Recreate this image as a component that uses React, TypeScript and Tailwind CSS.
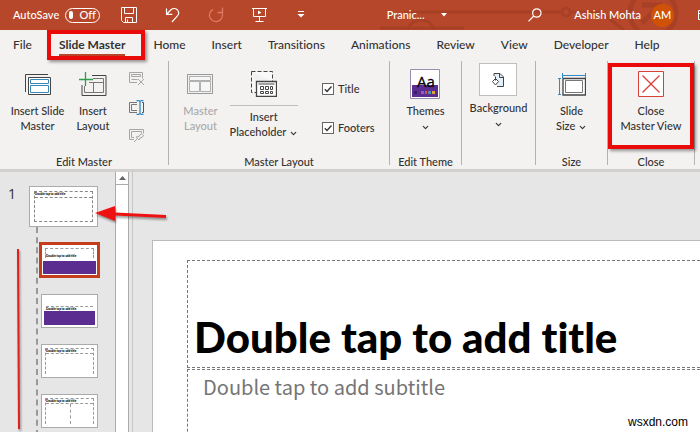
import React, { useState } from 'react';
import { ChevronDown } from 'lucide-react';

const tabs = ['File', 'Slide Master', 'Home', 'Insert', 'Transitions', 'Animations', 'Review', 'View', 'Developer', 'Help'];

const UndoIcon = () => (
  <svg width="15" height="17" viewBox="0 0 15 17" fill="none" stroke="#fff" strokeWidth="1.2">
    <path d="M1.500 1.500v5.800h5.800M1.800 7L6 2.800c2.200-2 5-1.500 6.500.2 1.600 2 1.400 4.500-.3 6.200L7 15" />
  </svg>
);

const RedoIcon = () => (
  <svg width="16" height="16" viewBox="0 0 16 16" fill="none" stroke="#de7a62" strokeWidth="1.3">
    <path d="M9.500 5.500h5v-5M13.800 5.200A6.500 6.500 0 1 1 5 2.300" />
  </svg>
);

const SaveIcon = () => (
  <svg width="16" height="16" viewBox="0 0 16 16" fill="none" stroke="#fff">
    <path d="M.500.500h15v15h-13l-2-2zM3.500.500v6h9v-6M4.500 15.500v-5h7v5M6.500 15.500v-3" />
  </svg>
);

const PresentIcon = () => (
  <svg width="15" height="15" viewBox="0 0 15 15" fill="none" stroke="#fff">
    <path d="M0 .500h15M1.500.500v8h12v-8M7.500 8.500v5M3.500 13.500h8" />
    <path d="M6 2.500v4l3.500-2z" fill="#fff" stroke="none" />
  </svg>
);

const SearchIcon = () => (
  <svg width="14" height="14" viewBox="0 0 14 14" fill="none" stroke="#fff" strokeWidth="1.200">
    <circle cx="8.800" cy="5" r="4.200" />
    <path d="M5.800 8L.500 13.300" />
  </svg>
);

const InsertMasterIcon = () => (
  <svg width="27" height="23" viewBox="0 0 27 23" fill="none" stroke="#444">
    <path d="M1.500 19V1.500H24" />
    <path d="M4.500 4.500h22v17h-22z" fill="#fff" />
    <path d="M6.500 6.500h18v4h-18zM6.500 12.500h18v7h-18z" stroke="#3a87b9" fill="#fff" />
  </svg>
);

const InsertLayoutIcon = () => (
  <svg width="28" height="25" viewBox="0 0 28 25" fill="none" stroke="#444">
    <path d="M13 3.500h14v20h-24V13" />
    <path d="M14 6.500h10.500v14h-19V14M10 10.500h14M14.500 10.500v10" stroke="#777" />
    <path d="M6.500 0v14M0 7.500h14" stroke="#2d9f4c" strokeWidth="1.300" />
  </svg>
);

const DeleteIcon = () => (
  <svg width="16" height="15" viewBox="0 0 16 15" fill="none" stroke="#a6a6a6">
    <path d="M8 11.500H.500v-10h13v6M2.500 3.500h9v2h-9zM2.500 8.500h6M9 8l6 6M15 8l-6 6" />
  </svg>
);

const RenameIcon = () => (
  <svg width="16" height="15" viewBox="0 0 16 15" fill="none" stroke="#555">
    <path d="M8 2.500H.500v10H8M8 4.500H2.500v6H8" stroke="#777" />
    <path d="M13 2.500h1.500v10H13" />
    <path d="M7.500.500h2l1.500 1 1.500-1h2M7.500 14.500h2l1.500-1 1.500 1h2M11 1.500v12" stroke="#2f8ac6" strokeWidth="1.300" />
  </svg>
);

const PreserveIcon = () => (
  <svg width="16" height="14" viewBox="0 0 16 14" fill="none" stroke="#a6a6a6">
    <path d="M5 10.500H.500v-10h14v4M5 8.500H2.500v-6h10v2M5 13l3-3M7 8l3 3 1-2 2.500-1 1-1.500-2-1.500-2 1-.500 1.500z" />
  </svg>
);

const MasterLayoutIcon = () => (
  <svg width="26" height="20" viewBox="0 0 26 20" fill="none" stroke="#b0b0b0">
    <path d="M.500.500h25v19H.500z" stroke="#999" />
    <path d="M2.500 2.500h21v4h-21zM2.500 7.500h10v10h-10zM13.500 7.500h10v10h-10z" fill="#f6f6f6" />
  </svg>
);

const PlaceholderIcon = () => (
  <svg width="26" height="26" viewBox="0 0 26 26" fill="none" stroke="#444">
    <path d="M.500.500h21v10M.500.500v21h5" fill="#fafafa" strokeDasharray="4 2" />
    <path d="M5.500 10.500h20v15h-20z" fill="#fff" strokeWidth="1.300" />
    <path d="M7.500 13h16" strokeWidth="1" />
    <path d="M9.500 15.500h3v3h-3zM14.500 15.500h3v3h-3zM19.500 15.500h2v3h-2zM9.500 20.500h3v2h-3zM14.500 20.500h3v2h-3zM19.500 20.500h2v2h-2z" />
  </svg>
);

const ThemesIcon = () => (
  <svg width="30" height="30" viewBox="0 0 30 30">
    <path d="M.500.500h29v29H.500z" fill="#fff" stroke="#9a8fb0" />
    <path d="M2 16h26v12H2z" fill="#5c2d91" />
    <text x="7" y="18" fontSize="15" fontFamily="Open Sans, sans-serif" fill="#000" stroke="#000" strokeWidth=".3">Aa</text>
    <path d="M4 22h3v3H4z" fill="#3b1b66" />
    <path d="M11 22h3v3h-3z" fill="#8d5ad0" />
    <path d="M15 22h2v3h-2z" fill="#d9534f" />
    <path d="M18 22h3v3h-3z" fill="#4a8fb5" />
    <path d="M22 22h3v3h-3z" fill="#e3a13a" />
  </svg>
);

const BackgroundIcon = () => (
  <svg width="14" height="16" viewBox="0 0 14 16" fill="none" stroke="#444">
    <path d="M3 4V1.500h6L12.500 5v9.500H6" fill="#e3f0fa" />
    <path d="M8.500 1.500V5.500h4" />
    <path d="M4.500 4.500v4M1.500 9.500l3-3 3 3-3 3.500z" fill="#fff" />
  </svg>
);

const SlideSizeIcon = () => (
  <svg width="28" height="23" viewBox="0 0 28 23" fill="none" stroke="#2f8ac6">
    <path d="M4 2.500h24M4.500 0v5M27.500 0v5M1.500 5v17M0 5.500h3M0 21.500h3" />
    <path d="M5 5.500h22.500v16.500H5z" stroke="#444" strokeWidth="1.300" fill="#fff" />
    <path d="M7.500 7.500h17v12h-17z" stroke="#777" />
  </svg>
);

const CloseIcon = () => (
  <svg width="26" height="26" viewBox="0 0 26 26" fill="none" stroke="#d9403a">
    <path d="M.500.500h25v25H.500z" fill="#fff" />
    <path d="M4.500 4.500l17 17M21.500 4.500l-17 17" strokeWidth="1.300" />
  </svg>
);

const Caret = () => <ChevronDown size={9} strokeWidth={3} className="inline" />;

interface RibbonButtonProps {
  icon: React.ReactNode;
  lines: React.ReactNode[];
  disabled?: boolean;
}

const RibbonButton: React.FC<RibbonButtonProps> = ({ icon, lines, disabled }) => (
  <button disabled={disabled} className="flex flex-col items-center leading-[15px] whitespace-nowrap disabled:text-[#a9a9a9]">
    <span className="flex h-[34px] items-center pb-1">{icon}</span>
    {lines.map((line, i) => (
      <span key={i}>{line}</span>
    ))}
  </button>
);

interface RibbonGroupProps {
  label?: string;
  className: string;
  children: React.ReactNode;
}

const RibbonGroup: React.FC<RibbonGroupProps> = ({ label, className, children }) => (
  <>
    <section className={`flex h-[108px] shrink-0 flex-col ${className}`}>
      <div className="flex flex-1 items-start justify-center pt-2">{children}</div>
      <h2 className="h-[14px] text-center leading-[14px]">{label}</h2>
    </section>
    <div className="h-[104px] w-px shrink-0 bg-[#b5b3b1]" />
  </>
);

interface OptionProps {
  id: string;
  label: string;
}

const Option: React.FC<OptionProps> = ({ id, label }) => {
  const [checked, setChecked] = useState(true);
  return (
    <label htmlFor={id} className="flex items-center gap-1 leading-[15px]">
      <span className="grid">
        <input
          id={id}
          type="checkbox"
          checked={checked}
          onChange={() => setChecked(!checked)}
          className="col-start-1 row-start-1 size-3 appearance-none border border-[#666] bg-white"
        />
        <svg width="12" height="12" viewBox="0 0 12 12" fill="none" stroke="#333" strokeWidth="1.300" className="pointer-events-none col-start-1 row-start-1">
          {checked && <path d="M2.800 6.300l2.200 2.200 4.500-5" />}
        </svg>
      </span>
      {label}
    </label>
  );
};

const Ribbon = () => (
  <div className="flex items-start border-b-3 border-[#d2d0ce] bg-[#f3f2f1] pt-px">
    <RibbonGroup label="Edit Master" className="w-[168px]">
      <div className="flex gap-3">
        <RibbonButton icon={<InsertMasterIcon />} lines={['Insert Slide', 'Master']} />
        <RibbonButton icon={<InsertLayoutIcon />} lines={['Insert', 'Layout']} />
        <div className="flex flex-col gap-[14px] pt-[2px] pr-3 pl-2">
          <button aria-label="Delete" disabled><DeleteIcon /></button>
          <button aria-label="Rename"><RenameIcon /></button>
          <button aria-label="Preserve" disabled><PreserveIcon /></button>
        </div>
      </div>
    </RibbonGroup>
    <RibbonGroup label="Master Layout" className="w-[220px]">
      <div className="flex gap-3">
        <RibbonButton disabled icon={<MasterLayoutIcon />} lines={['Master', 'Layout']} />
        <button className="flex flex-col items-center leading-[15px] whitespace-nowrap">
          <span className="flex h-[37px] w-full justify-center border-b border-[#c0bebc] pt-[2px]"><PlaceholderIcon /></span>
          <span className="pt-[3px]">Insert</span>
          <span>Placeholder <Caret /></span>
        </button>
        <div className="flex flex-col gap-6 pt-3 pl-3">
          <Option id="show-title" label="Title" />
          <Option id="show-footers" label="Footers" />
        </div>
      </div>
    </RibbonGroup>
    <RibbonGroup label="Edit Theme" className="w-[71px]">
      <RibbonButton icon={<ThemesIcon />} lines={['Themes', <Caret />]} />
    </RibbonGroup>
    <RibbonGroup className="w-[73px]">
      <button className="-mt-1.5 flex flex-col items-center leading-[15px]">
        <span className="mb-1 flex h-[33px] w-[38px] items-center justify-center border border-[#c0bebc] bg-white"><BackgroundIcon /></span>
        <span>Background</span>
        <span><Caret /></span>
      </button>
    </RibbonGroup>
    <RibbonGroup label="Size" className="w-[71px]">
      <RibbonButton icon={<SlideSizeIcon />} lines={['Slide', <>Size <Caret /></>]} />
    </RibbonGroup>
    <RibbonGroup label="Close" className="w-[86px]">
      <div className="relative flex w-full justify-center">
        <RibbonButton icon={<CloseIcon />} lines={['Close', 'Master View']} />
        <div className="pointer-events-none absolute inset-x-0 -top-1.5 -bottom-4 border-4 border-[#ea0a0a] shadow-[2px_2px_3px_rgba(0,0,0,0.4)]" />
      </div>
    </RibbonGroup>
  </div>
);

const TitleBar = () => (
  <header className="relative flex h-[30px] items-center bg-[#b7472a] text-[11px] text-white">
    <svg width="320" height="30" viewBox="0 0 320 30" fill="none" stroke="#a84026" strokeWidth="3" className="absolute top-0 right-0">
      <path d="M24 12h158M190 12h30l24 18M0 28h84" />
      <circle cx="186" cy="12" r="4" />
      <circle cx="41" cy="34" r="14" />
      <circle cx="273" cy="13" r="23" strokeWidth="5" />
      <path d="M262 5h18v14M280 5l-18 18" strokeWidth="5" />
    </svg>
    <div className="relative flex w-full items-center pl-[13px]">
      <span className="w-[52px]">AutoSave</span>
      <button aria-label="AutoSave off" className="flex h-[15px] w-[35px] items-center gap-1.5 rounded-full border border-white px-[3px] leading-3">
        <span className="size-2 rounded-full bg-white" />
        Off
      </button>
      <button aria-label="Save" className="ml-[21px]"><SaveIcon /></button>
      <button aria-label="Undo" className="ml-[28px]"><UndoIcon /></button>
      <button aria-label="Redo" className="ml-[28px]"><RedoIcon /></button>
      <button aria-label="Start slide show" className="ml-[28px]"><PresentIcon /></button>
      <button aria-label="Customize toolbar" className="ml-[30px]">
        <svg width="8" height="8" viewBox="0 0 8 8" fill="#fff"><path d="M1 0h6v1H1zM.500 3h7L4 6.500z" /></svg>
      </button>
      <div className="flex flex-1 items-center justify-center gap-4">
        <span>Pranic...</span>
        <svg width="6" height="4" viewBox="0 0 6 4" fill="#fff"><path d="M0 0h6L3 3.500z" /></svg>
      </div>
      <button aria-label="Search"><SearchIcon /></button>
      <span className="ml-8">Ashish Mohta</span>
      <span className="mr-6 ml-2.5 flex size-[23px] items-center justify-center rounded-full bg-[#d05207]">AM</span>
      <svg width="2" height="12" viewBox="0 0 2 12" fill="none" stroke="#fff"><path d="M2 1.500H.500v9H2M.500 4.500H2" /></svg>
    </div>
  </header>
);

const TabBar = () => (
  <nav className="flex h-[30px] items-center gap-[26px] bg-[#f3f2f1] pl-[13px] text-[12px] whitespace-nowrap">
    {tabs.map(tab =>
      tab === 'Slide Master' ? (
        <div key={tab} className="relative mr-0.5 ml-px">
          <button className="border-b-2 border-[#b7472a] pt-0.5 leading-[18px] font-bold">{tab}</button>
          <div className="pointer-events-none absolute -top-1 -right-5 -bottom-1 -left-3 z-10 border-4 border-[#ea0a0a] shadow-[2px_2px_3px_rgba(0,0,0,0.4)]" />
        </div>
      ) : (
        <button key={tab}>{tab}</button>
      )
    )}
  </nav>
);

const TinyTitle = () => <p className="text-[3px] leading-[4px] font-black whitespace-nowrap text-black">Double tap to add title</p>;

const CoverThumb = () => (
  <div className="flex h-full flex-col p-[2px]">
    <div className="flex flex-1 flex-col justify-end px-[2px]">
      <div className="border-t border-dashed border-[#999]"><TinyTitle /></div>
    </div>
    <div className="h-[14px] bg-[#5c2d91]" />
  </div>
);

const ThumbnailPane = () => (
  <aside className="relative flex w-[115px] shrink-0 gap-[14px] overflow-hidden pt-[14px] pl-2">
    <span className="w-[7px] font-['Open_Sans'] text-[14px] leading-4 font-normal">1</span>
    <div>
      <button aria-label="Slide master" className="block h-[41px] w-[69px] border border-[#ababab] bg-white p-[4px] text-left">
        <div className="h-full border border-dashed border-[#888]">
          <div className="h-[6px] border-b border-dashed border-[#888]"><TinyTitle /></div>
        </div>
      </button>
      <div className="ml-[7px] flex flex-col gap-[16px] border-l-2 border-dashed border-[#999] pt-[15px] pb-2">
        <button aria-label="Title slide layout" className="ml-[1px] h-[36px] w-[61px] border-[3px] border-[#c43e1c] bg-white text-left">
          <div className="flex h-full flex-col p-px">
            <div className="flex-1 px-[2px] pt-[2px]">
              <div className="border border-b-0 border-dashed border-[#999] pt-[5px]"><TinyTitle /></div>
            </div>
            <div className="h-[13px] bg-[#5c2d91]" />
          </div>
        </button>
        <button aria-label="Section layout" className="ml-[3px] h-[34px] w-[57px] border border-[#ababab] bg-white text-left"><CoverThumb /></button>
        <button aria-label="Content layout" className="ml-[3px] h-[34px] w-[57px] border border-[#ababab] bg-white p-[3px] text-left">
          <div className="h-full border border-b-0 border-dashed border-[#999]">
            <div className="border-b border-dashed border-[#999]"><TinyTitle /></div>
          </div>
        </button>
        <button aria-label="Two content layout" className="ml-[3px] h-[34px] w-[57px] border border-[#ababab] bg-white p-[3px] text-left">
          <div className="flex h-full flex-col border border-b-0 border-dashed border-[#999]">
            <div className="border-b border-dashed border-[#999]"><TinyTitle /></div>
            <div className="mr-[22px] flex-1 border-r border-dashed border-[#999]" />
          </div>
        </button>
      </div>
    </div>
  </aside>
);

export default function App() {
  return (
    <div className="relative flex h-screen flex-col overflow-hidden bg-[#e6e6e6] font-['Lato',sans-serif] text-[11px] font-medium text-[#333] [font-variant-ligatures:none]">
      <TitleBar />
      <TabBar />
      <Ribbon />
      <main className="relative flex min-h-0 flex-1">
        <ThumbnailPane />
        <div className="w-[14px] shrink-0 border-x border-[#ababab] bg-white">
          <button aria-label="Scroll up" className="flex h-[13px] w-full items-center justify-center border-b border-[#ababab]">
            <svg width="7" height="4" viewBox="0 0 7 4" fill="#666"><path d="M0 4h7L3.500 0z" /></svg>
          </button>
        </div>
        <div className="ml-[3px] w-px shrink-0 bg-[#c8c6c4]" />
        <div className="min-w-0 flex-1 pt-[68px] pl-[19px]">
          <div className="h-full border-t border-l border-[#bbb] bg-white pt-[19px] pl-[34px]">
            <h1 className="flex h-[108px] items-end border border-r-0 border-dashed border-[#777] pb-1.5 pl-[6px] text-[42px] leading-[48px] font-black whitespace-nowrap text-black">
              Double tap to add title
            </h1>
            <p className="mt-px h-full border border-r-0 border-dashed border-[#777] pt-0.5 pl-[15px] font-['Noto_Sans_CJK_JP',sans-serif] text-[20px] leading-[30px] font-normal whitespace-nowrap text-[#757575]">
              Double tap to add subtitle
            </p>
          </div>
        </div>
        <svg width="180" height="260" viewBox="0 0 180 260" className="pointer-events-none absolute top-0 left-0 drop-shadow-[1px_2px_1px_rgba(0,0,0,0.4)]">
          <path d="M166 44.500L115 42" stroke="#ee1111" strokeWidth="3" />
          <path d="M95 41l20-7v15z" fill="#ee1111" />
          <path d="M18 77l1 180" stroke="#e02020" strokeWidth="2" />
        </svg>
      </main>
      <span className="absolute right-3 bottom-0.5 font-['Liberation_Sans',sans-serif] text-[12px] leading-4 font-normal text-black">wsxdn.com</span>
    </div>
  );
}
